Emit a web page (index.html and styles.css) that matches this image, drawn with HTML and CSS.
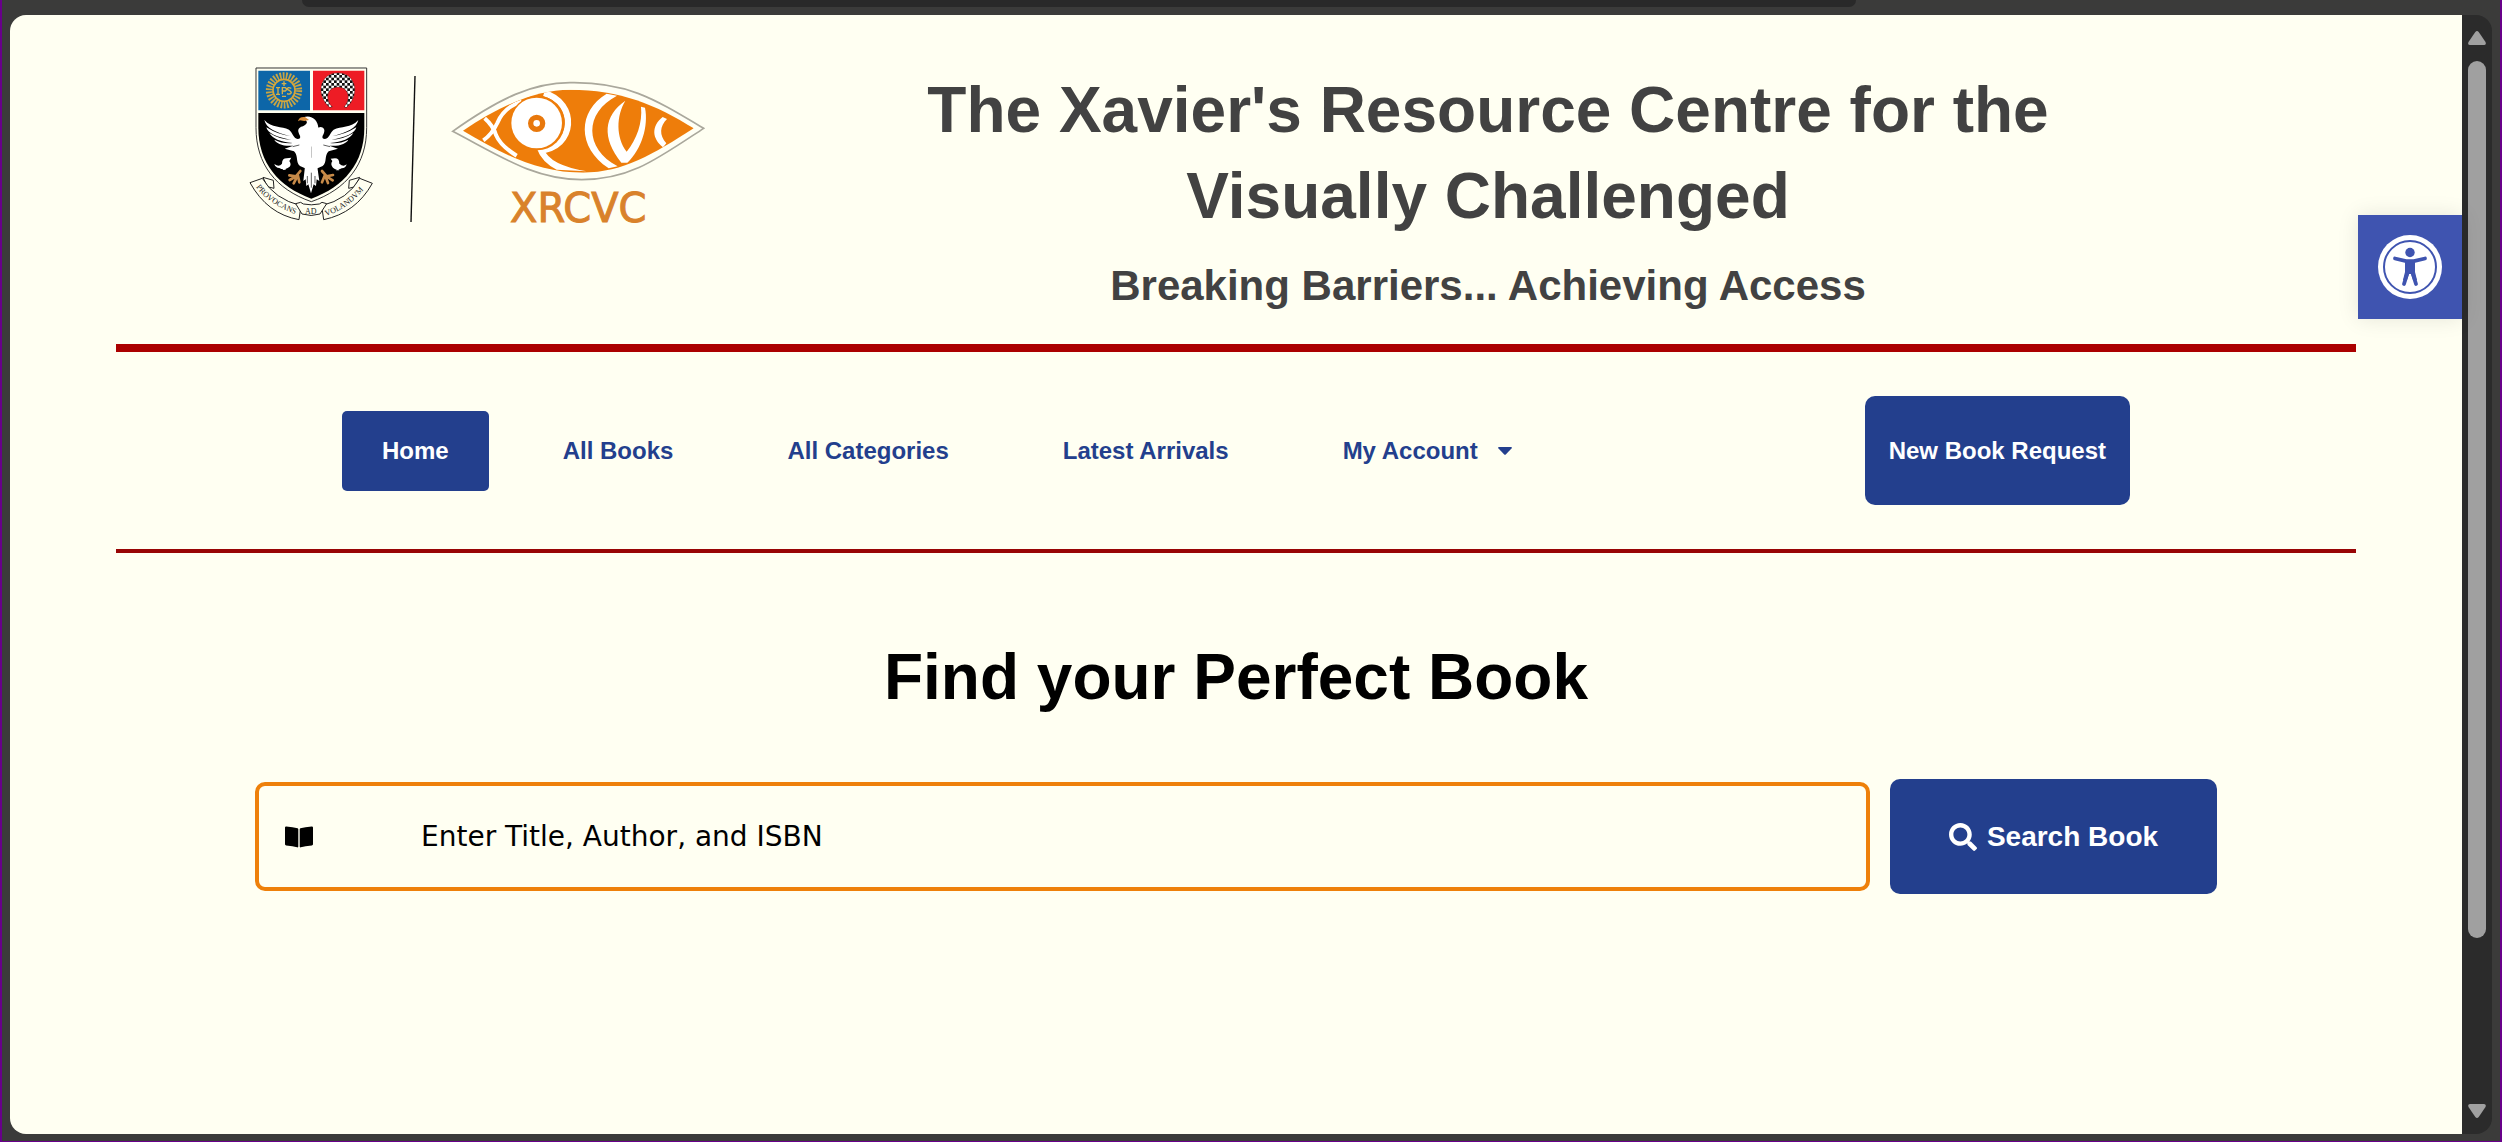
FILE: index.html
```html
<!DOCTYPE html>
<html lang="en">
<head>
<meta charset="utf-8">
<meta name="viewport" content="width=device-width, initial-scale=1">
<title>The Xavier's Resource Centre for the Visually Challenged</title>
<link rel="stylesheet" href="styles.css">
</head>
<body class="window">
<div class="window-top"><div class="address-bar"></div></div>
<div class="viewport">
  <div class="page">
    <header class="masthead">
      <a class="logo" href="#" aria-label="XRCVC home">
        <svg class="logo-art" viewBox="0 0 456 172" aria-hidden="true">
          <defs>
            <pattern id="check" width="16" height="16" patternUnits="userSpaceOnUse">
              <rect width="16" height="16" fill="#fff"/>
              <path d="M0 0h8v8H0zM8 8h8v8H8z" fill="#111"/>
            </pattern>
            <path id="arc-left" d="M7 121Q21 140 52 150"/>
            <path id="arc-right" d="M77 150Q104 141 121 115"/>
            <clipPath id="eye-clip"><path d="M219 209Q400 86 540 86C690 86 800 132 911 202C790 280 700 334 580 335C440 335 330 275 219 209Z"/></clipPath>
          </defs>
          <g transform="translate(-19 -15) scale(.33333)">
            <path d="M78 51H410V230C410 340 350 415 244 452C138 415 78 340 78 230Z" fill="#fffff0" stroke="#333" stroke-width="3"/>
            <path d="M85 59H240V178H85Z" fill="#0d66a8"/>
            <path d="M249 59H403V178H249Z" fill="#ee1c25"/>
            <path d="M85 186H403V230C403 336 343 406 244 443C145 406 85 336 85 230Z" fill="#000"/>
            <circle cx="162" cy="118" r="44" fill="none" stroke="#c9a544" stroke-width="21" stroke-dasharray="5 4.2"/>
            <circle cx="162" cy="118" r="33" fill="#0d66a8" stroke="#d6a63a" stroke-width="5"/>
            <path d="M144 110v20M138 110h12M138 130h12M157 130v-20h9q7 5 0 10h-9M184 112q-12-5-12 3q12 5 12 10q-4 7-13 3M162 91v14M155 98h14M156 136h12" fill="none" stroke="#d6b04a" stroke-width="4"/>
            <path d="M299 169C255 130 270 66 324 66C377 66 392 130 350 169L342 168C365 145 356 108 324 108C291 108 283 145 307 168Z" fill="url(#check)" stroke="#222" stroke-width="1"/>
            <path d="M103 207C125 232 155 225 177 236C188 244 190 262 203 264C217 262 208 252 206 245C202 235 208 229 216 228L244 235V360L210 345C196 335 206 314 192 301L164 293L190 284C160 287 138 277 133 266Q158 279 188 276C150 273 128 262 118 246Q150 266 184 266C140 260 112 246 109 229Q145 252 181 255C137 245 108 231 103 207Z" fill="#fff"/>
            <path d="M385 207C363 232 333 225 311 236C300 244 298 262 285 264C271 262 280 252 282 245C286 235 280 229 272 228L244 235V360L278 345C292 335 282 314 296 301L324 293L298 284C328 287 350 277 355 266Q330 279 300 276C338 273 360 262 370 246Q338 266 304 266C348 260 376 246 379 229Q343 252 307 255C351 245 380 231 385 207Z" fill="#fff"/>
            <path d="M220 199C244 190 264 207 265 231V300L234 280L211 228Q229 224 231 213Z" fill="#fff"/>
            <path d="M204 211Q207 196 225 198L237 207L223 210L210 208Z" fill="#d98d3a"/>
            <path d="M228 320L220 390L227 385L229 405L235 400L243 427L251 400L258 405L260 385L268 390L258 320Z" fill="#fff"/>
            <path d="M232 375v22M244 365v45M255 375v22M188 287l20-5M300 287l-20-5" stroke="#111" stroke-width="2"/>
            <path d="M211 360L198 376L178 373M200 375L179 387M202 376L191 397M204 374L208 394M276 360L290 376L309 372M288 375L308 388M286 375L294 396M284 374L276 394" fill="none" stroke="#c78a48" stroke-width="8" stroke-linecap="round"/>
            <path d="M133 339Q147 350 156 338Q156 322 170 322L184 320L178 330Q188 344 173 351Q160 358 148 351Q136 350 133 339ZM158 357l5-7 5 7zM302 323L315 322Q328 322 328 338Q340 349 350 340Q347 352 335 352Q320 360 309 350Q300 340 307 330ZM318 358l5-7 5 7z" fill="#fff"/>
            <g fill="#fffff0" stroke="#222" stroke-width="3" stroke-linejoin="round">
              <path d="M99 379L130 388L132 412L112 407ZM389 379L358 388L356 412L376 407Z"/>
              <path d="M60 395L97 382Q134 445 213 464L207 506Q112 489 60 395Z"/>
              <path d="M427 397L389 382Q354 445 275 464L281 506Q377 486 427 397Z"/>
              <path d="M197 458L212 454L220 459Q244 464 268 459L276 454L290 458L270 489Q244 498 216 489Z"/>
            </g>
          </g>
          <g class="motto">
            <text><textPath href="#arc-left">PROVOCANS</textPath></text>
            <text x="56" y="148">AD</text>
            <text><textPath href="#arc-right">VOLANDVM</textPath></text>
          </g>
          <path d="M166 10L162 156" stroke="#111" stroke-width="1.4"/>
          <g transform="translate(141 -5) scale(.33333)">
            <path d="M188 211C330 110 430 65 540 65C710 62 790 112 941 202C800 295 720 356 575 356C430 355 330 285 188 211Z" fill="#fffff4" stroke="#aaa89c" stroke-width="5"/>
            <g clip-path="url(#eye-clip)">
              <path d="M200 70H930V350H200Z" fill="#ee7d0a"/>
              <g fill="none" stroke="#fff">
                <path d="M284 172Q310 195 318 222Q332 255 380 284" stroke-width="12"/>
                <path d="M280 238Q306 220 322 186Q342 138 395 122" stroke-width="12"/>
                <path d="M462 96C565 125 555 262 448 268" stroke-width="19"/>
              </g>
              <path d="M440 262L462 264Q478 312 590 331L500 326Q456 305 440 262Z" fill="#fff"/>
              <circle cx="442" cy="186" r="82" fill="#ee7d0a"/>
              <circle cx="440" cy="186" r="76" fill="#fff"/>
              <circle cx="440" cy="187" r="18" fill="#fff" stroke="#e8780c" stroke-width="16"/>
              <path d="M650 98C563 150 560 258 656 322L683 316C582 262 582 155 681 104Z" fill="#fff"/>
              <path d="M706 119C640 165 635 230 694 305H712C755 265 776 195 765 140L753 137C758 185 740 235 710 272C678 230 678 165 706 119Z" fill="#fff"/>
              <path d="M818 168C784 195 785 232 819 259L829 247C807 222 809 196 831 174Z" fill="#fff"/>
            </g>
          </g>
          <text class="logo-name" x="261" y="156">XRCVC</text>
        </svg>
      </a>
      <div class="masthead-text">
        <h1 class="display">The Xavier's Resource Centre for the Visually Challenged</h1>
        <p class="tagline">Breaking Barriers... Achieving Access</p>
      </div>
    </header>

    <div class="nav-bar">
      <nav class="menu" aria-label="Main">
        <a class="menu-item menu-item-current" href="#" aria-current="page">Home</a>
        <a class="menu-item" href="#">All Books</a>
        <a class="menu-item" href="#">All Categories</a>
        <a class="menu-item" href="#">Latest Arrivals</a>
        <a class="menu-item" href="#">My Account
          <svg class="caret" viewBox="0 0 14 8" aria-hidden="true"><path d="M1 0H13Q14.500 0 13.500 1.500L8 7.300Q7 8.300 6 7.300L.5 1.500Q-.5 0 1 0Z" fill="currentColor"/></svg>
        </a>
      </nav>
      <a class="request" href="#">New Book Request</a>
    </div>

    <main class="finder">
      <h2 class="display">Find your Perfect Book</h2>
      <form class="search">
        <label class="field">
          <svg class="book-icon" viewBox="0 0 28 22" aria-label="Book title, author or ISBN"><path d="M0 1.500Q0 .3 1.300.4Q8 .8 12.600 2.200Q13.300 2.500 13.300 3.200V20.600Q13.300 21.700 12.200 21.300Q8 19.800 1.200 19.400Q0 19.300 0 18.200ZM28 1.500Q28 .3 26.700.4Q20 .8 15.400 2.200Q14.700 2.500 14.700 3.200V20.600Q14.700 21.700 15.800 21.300Q20 19.800 26.800 19.400Q28 19.300 28 18.200Z"/></svg>
          <input class="field-input" type="text" placeholder="Enter Title, Author, and ISBN">
        </label>
        <button class="search-button" type="submit">
          <svg class="search-icon" viewBox="0 0 512 512" aria-hidden="true"><path fill="currentColor" d="M505 442.700L405.300 343c-4.500-4.500-10.600-7-17-7H372c27.600-35.300 44-79.700 44-128C416 93.100 322.900 0 208 0S0 93.100 0 208s93.100 208 208 208c48.300 0 92.700-16.400 128-44v16.300c0 6.400 2.500 12.500 7 17l99.700 99.700c9.400 9.400 24.600 9.400 33.900 0l28.300-28.300c9.400-9.400 9.400-24.600.1-34zM208 336c-70.700 0-128-57.200-128-128 0-70.700 57.200-128 128-128 70.700 0 128 57.200 128 128 0 70.700-57.200 128-128 128z"/></svg>
          Search Book
        </button>
      </form>
    </main>

    <button class="access-button" type="button" aria-label="Open accessibility toolbar">
      <svg class="access-icon" viewBox="0 0 64 64" aria-hidden="true">
        <circle cx="32" cy="32" r="32" fill="#fff"/>
        <circle cx="32" cy="32" r="26" fill="none" stroke="#3f54b0" stroke-width="2"/>
        <circle cx="32" cy="17.500" r="4.700" fill="#3f54b0"/>
        <path d="M17 23.500L28 26.200H36L47 23.500M26 49L30 36M38 49L34 36" fill="none" stroke="#3f54b0" stroke-width="3.800" stroke-linecap="round"/>
        <path d="M27 25H37V37L39 45H35L33 39H31L29 45H25L27 37Z" fill="#3f54b0"/>
      </svg>
    </button>
  </div>
  <div class="scrollbar" aria-hidden="true">
    <svg class="scroll-arrow" viewBox="0 0 18 14"><path d="M7.300 1Q9-1 10.700 1L17.500 11Q18.500 14 16 14H2Q-.5 14 .5 11Z"/></svg>
    <div class="scroll-track"><div class="scroll-thumb"></div></div>
    <svg class="scroll-arrow" viewBox="0 0 18 14"><path d="M7.300 13Q9 15 10.700 13L17.500 3Q18.500 0 16 0H2Q-.5 0 .5 3Z"/></svg>
  </div>
</div>
</body>
</html>
```
FILE: styles.css
```css
:root {
  --blue: #233f8d;
  --cream: #fffff2;
  --frame: #3b3b3a;
  --purple: #68008a;
}

* { box-sizing: border-box; }

.window {
  margin: 0;
  min-height: 100vh;
  display: flex;
  flex-direction: column;
  padding: 0 8px 7px;
  border: 2px solid var(--purple);
  border-width: 0 2px 1px;
  background: var(--frame);
  font-family: "Liberation Sans", Arial, sans-serif;
}

.window-top {
  height: 15px;
  padding: 0 636px 0 292px;
}

.address-bar {
  height: 7px;
  border-radius: 0 0 16px 16px;
  background: #292929;
}

.viewport {
  flex: 1;
  display: flex;
  border-radius: 16px;
  overflow: hidden;
}

.page {
  position: relative;
  flex: 1;
  padding: 0 106px;
  background: var(--cream);
}

.masthead {
  display: flex;
  align-items: flex-start;
  padding: 51px 139px 30px 133px;
  border-bottom: 8px solid #ab0000;
}

.logo { flex: none; width: 510px; }

.logo-art {
  display: block;
  width: 456px;
  height: 172px;
}

.logo-name {
  font: 40px "DejaVu Sans", Verdana, sans-serif;
  fill: #d9822b;
  stroke: #d9822b;
  stroke-width: 1px;
}

.motto {
  font: 8px "Liberation Serif", serif;
  fill: #222;
}

.masthead-text {
  flex: 1;
  padding: 1px 60px 0;
  text-align: center;
  color: #424242;
}

.display {
  margin: 0;
  font-size: 64px;
  line-height: 86px;
  font-weight: bold;
}

.tagline {
  margin: 19px 0 0;
  font-size: 42px;
  line-height: 56px;
  font-weight: bold;
}

.nav-bar {
  display: flex;
  align-items: center;
  justify-content: space-between;
  padding: 44px 226px;
  border-bottom: 4px solid #980505;
}

.menu {
  display: flex;
  gap: 34px;
}

.menu-item,
.request {
  display: flex;
  align-items: center;
  font-size: 24px;
  line-height: 28px;
  font-weight: bold;
  text-decoration: none;
}

.menu-item {
  gap: 20px;
  padding: 26px 40px;
  border-radius: 5px;
  color: var(--blue);
}

.menu-item-current,
.request {
  background: var(--blue);
  color: #fff;
}

.request {
  height: 109px;
  padding: 0 24px;
  border-radius: 10px;
}

.caret {
  width: 14px;
  height: 8px;
}

.finder {
  padding: 81px 139px;
  text-align: center;
}

.search {
  display: flex;
  align-items: center;
  gap: 20px;
  margin-top: 59px;
}

.field {
  flex: 1;
  display: flex;
  align-items: center;
  gap: 108px;
  height: 109px;
  padding: 0 26px;
  border: 4px solid #ee800a;
  border-radius: 10px;
}

.book-icon {
  flex: none;
  width: 28px;
  height: 22px;
}

.field-input {
  flex: 1;
  height: 100%;
  padding: 0;
  border: 0;
  outline: 0;
  background: none;
  color: #000;
  font: 28px "DejaVu Sans", Verdana, sans-serif;
}

.field-input::placeholder {
  color: #000;
  opacity: 1;
}

.search-button {
  display: flex;
  align-items: center;
  justify-content: center;
  gap: 10px;
  width: 327px;
  height: 115px;
  padding: 0;
  border: 0;
  border-radius: 10px;
  background: var(--blue);
  color: #fff;
  font: bold 28px "Liberation Sans", Arial, sans-serif;
}

.search-icon {
  width: 28px;
  height: 28px;
}

.access-button {
  position: absolute;
  top: 200px;
  right: 0;
  display: grid;
  place-items: center;
  width: 104px;
  height: 104px;
  padding: 0;
  border: 0;
  background: #3f54b0;
  box-shadow: 0 0 20px rgba(0, 0, 0, .1);
}

.access-icon {
  width: 64px;
  height: 64px;
}

.scrollbar {
  display: flex;
  flex-direction: column;
  gap: 16px;
  width: 30px;
  padding: 16px 6px;
  background: #2b2b2b;
}

.scroll-arrow {
  width: 18px;
  height: 14px;
  fill: #a0a0a0;
}

.scroll-track { flex: 1; }

.scroll-thumb {
  height: 85.4%;
  border-radius: 9px;
  background: #a0a0a0;
}
```
